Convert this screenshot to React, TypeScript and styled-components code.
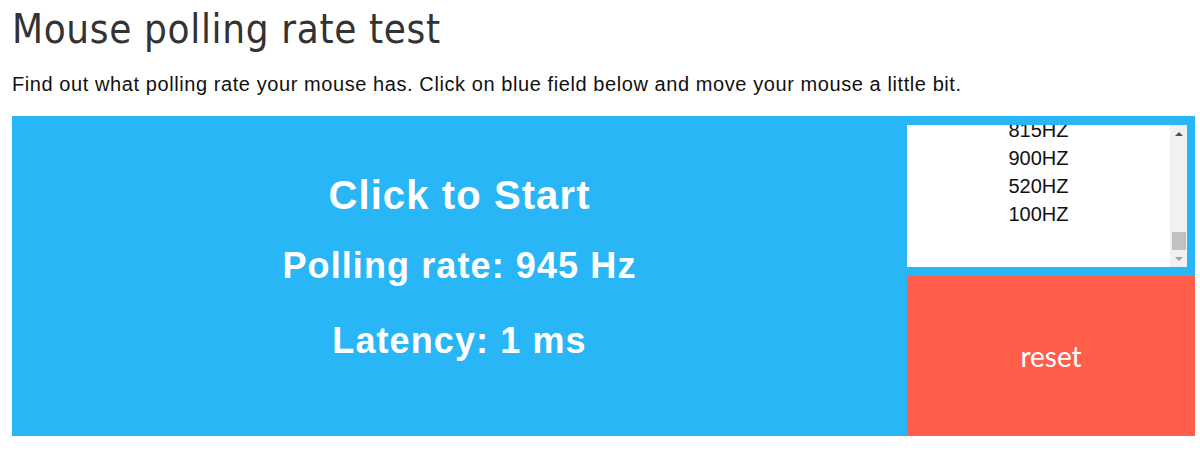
import React, { useEffect, useRef } from 'react'
import styled, { createGlobalStyle } from 'styled-components'

const GlobalStyle = createGlobalStyle`
  html, body {
    margin: 0;
    padding: 0;
    background: #fff;
  }
`

const Page = styled.div`
  padding: 7px 5px 0 12px;
  font-family: "Liberation Sans", Arial, sans-serif;
`

const Title = styled.h1`
  margin: 0;
  font-family: "DejaVu Sans", Tahoma, sans-serif;
  font-stretch: semi-condensed;
  font-weight: 400;
  font-size: 40px;
  line-height: 44px;
  letter-spacing: 0.65px;
  color: #333;
`

const Intro = styled.p`
  margin: 21px 0 20px;
  font-size: 20px;
  line-height: 24px;
  letter-spacing: 0.58px;
  color: #111;
`

const Field = styled.div`
  display: flex;
  height: 320px;
  background: #29b6f6;
`

const Stage = styled.div`
  flex: 1;
  display: flex;
  flex-direction: column;
  align-items: center;
  padding-top: 59px;
  color: #fff;
  font-weight: 700;
  letter-spacing: 1.1px;
  cursor: pointer;
`

const Headline = styled.div<{ $size: number; $gap?: number }>`
  font-size: ${p => p.$size}px;
  line-height: ${p => p.$size}px;
  margin-top: ${p => p.$gap ?? 0}px;
`

const Side = styled.div`
  width: 288px;
  display: flex;
  flex-direction: column;
  padding-top: 9px;
  gap: 9px;
`

const History = styled.div`
  display: flex;
  height: 142px;
  margin-right: 8px;
  background: #fff;
`

const HistoryList = styled.ul`
  flex: 1;
  margin: 0;
  padding: 0 0 39px;
  list-style: none;
  overflow: hidden;
  text-align: center;
  font-size: 20px;
  line-height: 28px;
  color: #111;
`

const Scrollbar = styled.div`
  width: 17px;
  display: flex;
  flex-direction: column;
  background: #f1f1f1;
`

const ArrowButton = styled.div<{ $down?: boolean }>`
  height: 17px;
  display: flex;
  align-items: center;
  justify-content: center;

  &::before {
    content: '';
    border-left: 4px solid transparent;
    border-right: 4px solid transparent;
    ${p => p.$down
      ? 'border-top: 4px solid #a3a3a3;'
      : 'border-bottom: 4px solid #505050;'}
  }
`

const Track = styled.div`
  flex: 1;
  display: flex;
  flex-direction: column;
  justify-content: flex-end;
  align-items: center;
`

const Thumb = styled.div`
  width: 14px;
  height: 18px;
  background: #c1c1c1;
`

const ResetButton = styled.button`
  flex: 1;
  border: 0;
  margin: 0;
  background: #ff5e4a;
  color: #fff;
  font-family: Lato, "Open Sans", sans-serif;
  font-size: 28px;
  cursor: pointer;
`

const rates = [1000, 875, 990, 760, 1000, 945, 880, 1000, 815, 900, 520, 100]

export default function App() {
  const listRef = useRef<HTMLUListElement>(null)

  useEffect(() => {
    if (listRef.current) listRef.current.scrollTop = listRef.current.scrollHeight
  }, [])

  return (
    <>
      <GlobalStyle />
      <Page>
        <Title>Mouse polling rate test</Title>
        <Intro>Find out what polling rate your mouse has. Click on blue field below and move your mouse a little bit.</Intro>
        <Field>
          <Stage>
            <Headline $size={40}>Click to Start</Headline>
            <Headline $size={36} $gap={33}>Polling rate: 945 Hz</Headline>
            <Headline $size={36} $gap={39}>Latency: 1 ms</Headline>
          </Stage>
          <Side>
            <History>
              <HistoryList ref={listRef}>
                {rates.map((r, i) => <li key={i}>{r}HZ</li>)}
              </HistoryList>
              <Scrollbar>
                <ArrowButton />
                <Track><Thumb /></Track>
                <ArrowButton $down />
              </Scrollbar>
            </History>
            <ResetButton>reset</ResetButton>
          </Side>
        </Field>
      </Page>
    </>
  )
}
